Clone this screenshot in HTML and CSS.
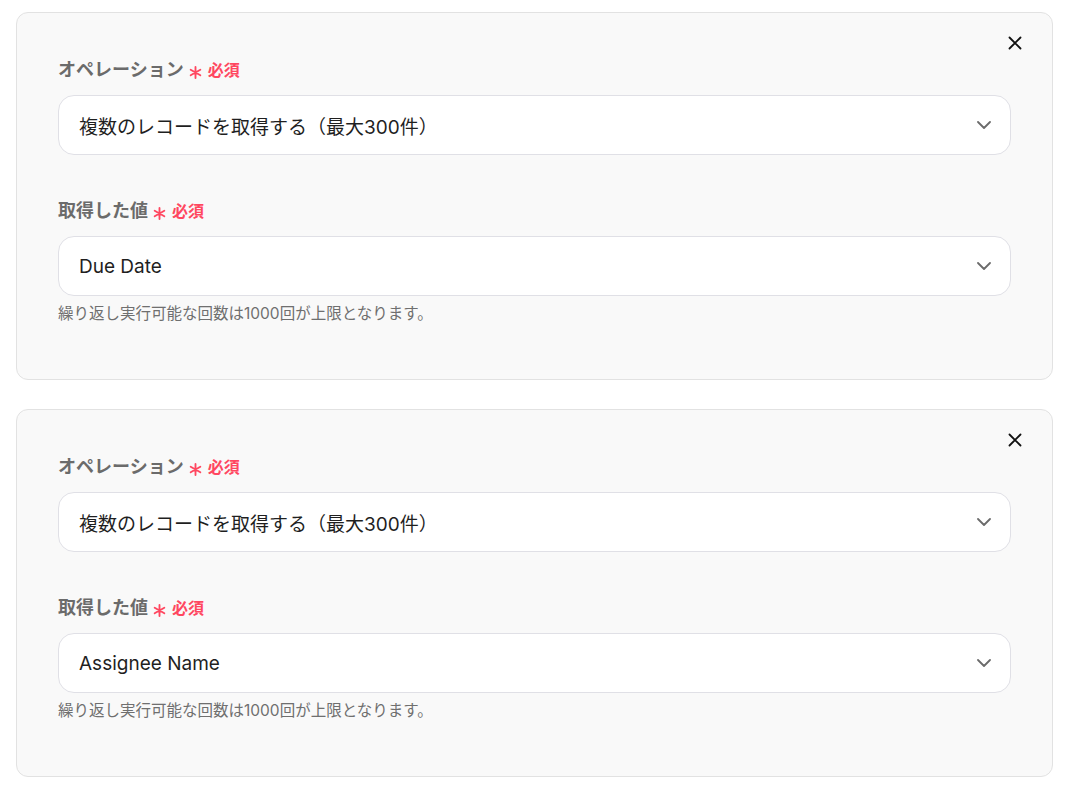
FILE: index.html
```html
<!DOCTYPE html>
<html lang="ja">
<head>
<meta charset="utf-8">
<title>繰り返し設定</title>
<link rel="stylesheet" href="styles.css">
</head>
<body>
<main class="stack">
  <section class="card">
    <button class="close" type="button" aria-label="閉じる">
      <svg viewBox="0 0 16 16" width="16" height="16"><path d="M2.5 2.5l11 11M13.5 2.5l-11 11" stroke="#111" stroke-width="1.8" stroke-linecap="round" fill="none"/></svg>
    </button>
    <div class="field">
      <label class="label">オペレーション<span class="req"><svg class="ast" viewBox="0 0 14 14" width="13" height="13"><path d="M7 1v12M1.8 4l10.4 6M12.2 4L1.8 10" stroke="#ff4760" stroke-width="2" stroke-linecap="round" fill="none"/></svg>必須</span></label>
      <div class="select">
        <span class="value">複数のレコードを取得する（最大300件）</span>
        <svg class="chev" viewBox="0 0 14 8" width="14" height="8"><path d="M1 1l6 6 6-6" stroke="#6b6b6b" stroke-width="1.8" fill="none" stroke-linecap="round" stroke-linejoin="round"/></svg>
      </div>
    </div>
    <div class="field">
      <label class="label">取得した値<span class="req"><svg class="ast" viewBox="0 0 14 14" width="13" height="13"><path d="M7 1v12M1.8 4l10.4 6M12.2 4L1.8 10" stroke="#ff4760" stroke-width="2" stroke-linecap="round" fill="none"/></svg>必須</span></label>
      <div class="select">
        <span class="value">Due Date</span>
        <svg class="chev" viewBox="0 0 14 8" width="14" height="8"><path d="M1 1l6 6 6-6" stroke="#6b6b6b" stroke-width="1.8" fill="none" stroke-linecap="round" stroke-linejoin="round"/></svg>
      </div>
      <p class="help">繰り返し実行可能な回数は1000回が上限となります。</p>
    </div>
  </section>

  <section class="card">
    <button class="close" type="button" aria-label="閉じる">
      <svg viewBox="0 0 16 16" width="16" height="16"><path d="M2.5 2.5l11 11M13.5 2.5l-11 11" stroke="#111" stroke-width="1.8" stroke-linecap="round" fill="none"/></svg>
    </button>
    <div class="field">
      <label class="label">オペレーション<span class="req"><svg class="ast" viewBox="0 0 14 14" width="13" height="13"><path d="M7 1v12M1.8 4l10.4 6M12.2 4L1.8 10" stroke="#ff4760" stroke-width="2" stroke-linecap="round" fill="none"/></svg>必須</span></label>
      <div class="select">
        <span class="value">複数のレコードを取得する（最大300件）</span>
        <svg class="chev" viewBox="0 0 14 8" width="14" height="8"><path d="M1 1l6 6 6-6" stroke="#6b6b6b" stroke-width="1.8" fill="none" stroke-linecap="round" stroke-linejoin="round"/></svg>
      </div>
    </div>
    <div class="field">
      <label class="label">取得した値<span class="req"><svg class="ast" viewBox="0 0 14 14" width="13" height="13"><path d="M7 1v12M1.8 4l10.4 6M12.2 4L1.8 10" stroke="#ff4760" stroke-width="2" stroke-linecap="round" fill="none"/></svg>必須</span></label>
      <div class="select">
        <span class="value">Assignee Name</span>
        <svg class="chev" viewBox="0 0 14 8" width="14" height="8"><path d="M1 1l6 6 6-6" stroke="#6b6b6b" stroke-width="1.8" fill="none" stroke-linecap="round" stroke-linejoin="round"/></svg>
      </div>
      <p class="help">繰り返し実行可能な回数は1000回が上限となります。</p>
    </div>
  </section>
</main>
</body>
</html>
```

FILE: styles.css
```css
* {
  box-sizing: border-box;
}

body {
  margin: 0;
  background: #ffffff;
  font-family: "Inter", "Noto Sans CJK JP", sans-serif;
  color: #1f1f1f;
}

.stack {
  display: flex;
  flex-direction: column;
  gap: 29px;
  padding: 12px 18px 0 16px;
}

.card {
  position: relative;
  background: #f9f9f9;
  border: 1px solid #e2e2e2;
  border-radius: 12px;
  padding: 44px 41px 0 41px;
  height: 368px;
  display: flex;
  flex-direction: column;
  gap: 43px;
}

.close {
  position: absolute;
  top: 20px;
  right: 27px;
  width: 20px;
  height: 20px;
  padding: 2px;
  border: 0;
  background: transparent;
  display: flex;
  align-items: center;
  justify-content: center;
  cursor: pointer;
}

.field {
  display: flex;
  flex-direction: column;
}

.label {
  display: flex;
  align-items: center;
  font-size: 18px;
  line-height: 26px;
  font-weight: 700;
  color: #6b6b6b;
  margin-bottom: 12px;
}

.req {
  display: inline-flex;
  align-items: center;
  color: #ff4760;
  font-size: 16px;
  font-weight: 700;
  margin-left: 5px;
}

.ast {
  flex: none;
  margin-right: 6px;
  position: relative;
  top: 2px;
}

.select {
  display: flex;
  align-items: center;
  justify-content: space-between;
  height: 60px;
  background: #ffffff;
  border: 1px solid #e0e0e6;
  border-radius: 16px;
  padding: 0 19px 0 20px;
}

.value {
  font-size: 19px;
  color: #1f1f1f;
}

.chev {
  flex: none;
}

.help {
  margin: 8px 0 0;
  font-size: 15.5px;
  line-height: 20px;
  color: #6f6f6f;
}
```
